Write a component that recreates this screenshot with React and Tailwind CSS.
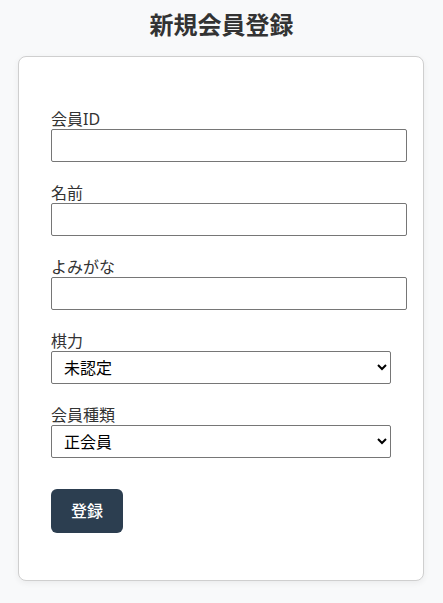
export default function App() {
  const font = { fontFamily: '"Noto Sans", "Noto Sans CJK JP", sans-serif' };
  return (
    <div className="min-h-[603px] bg-[#f8f9fa] text-[#333] pt-[9px]" style={font}>
      <h1 className="text-center text-[24px] font-bold leading-[32px] text-[#333]">新規会員登録</h1>
      <div className="ml-[18px] mt-[15px] w-[406px] rounded-[8px] border border-[#cfcfcf] bg-white px-[32px] pt-[52px] pb-[47px] shadow-[0_2px_6px_rgba(0,0,0,0.06)]">
        <form className="flex flex-col">
          {[
            ["会員ID", "text"],
            ["名前", "text"],
            ["よみがな", "text"],
          ].map(([label]) => (
            <div key={label} className="mb-[21px] flex flex-col">
              <label className="h-[20px] text-[16px] leading-[20px] text-[#333]">{label}</label>
              <input
                type="text"
                className="h-[33px] w-[356px] rounded-[2px] border border-[#767676] bg-white px-[8px] text-[16px]"
              />
            </div>
          ))}
          <div className="mb-[21px] flex flex-col">
            <label className="h-[20px] text-[16px] leading-[20px] text-[#333]">棋力</label>
            <select
              defaultValue="未認定"
              className="h-[33px] w-[340px] rounded-[2px] border border-[#767676] bg-white pl-[8px] text-[16px] text-black"
              style={font}
            >
              <option>未認定</option>
            </select>
          </div>
          <div className="flex flex-col">
            <label className="h-[20px] text-[16px] leading-[20px] text-[#333]">会員種類</label>
            <select
              defaultValue="正会員"
              className="h-[33px] w-[340px] rounded-[2px] border border-[#767676] bg-white pl-[8px] text-[16px] text-black"
              style={font}
            >
              <option>正会員</option>
            </select>
          </div>
          <div className="mt-[31px]">
            <button
              type="button"
              className="h-[44px] w-[72px] rounded-[6px] bg-[#2c3e50] text-[16px] font-medium text-white"
              style={font}
            >
              登録
            </button>
          </div>
        </form>
      </div>
    </div>
  );
}
